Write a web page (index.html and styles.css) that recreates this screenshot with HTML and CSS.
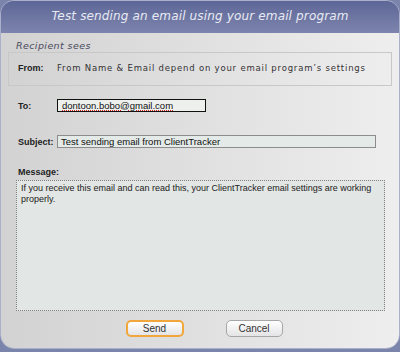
FILE: index.html
```html
<!DOCTYPE html>
<html lang="en">

<head>
    <meta charset="UTF-8">
    <meta name="viewport" content="width=device-width, initial-scale=1.0">
    <title>Test email</title>
    <link rel="stylesheet" href="styles.css">
</head>

<body>
    <div class="dialog">
        <div class="title-bar">Test sending an email using your email program</div>

        <div class="dialog-body">
            <div class="legend">Recipient sees</div>
            <div class="recipient-box">
                <span class="label">From:</span>
                <span class="from-text">From Name &amp; Email depend on your email program’s settings</span>
            </div>

            <div class="row to-row">
                <span class="label">To:</span>
                <div class="field to-field"><span class="misspelled">dontoon.bobo@gmail.com</span></div>
            </div>

            <div class="row subject-row">
                <span class="label">Subject:</span>
                <div class="field subject-field">Test sending email from ClientTracker</div>
            </div>

            <div class="message-label label">Message:</div>
            <div class="message-box">If you receive this email and can read this, your ClientTracker email settings are working properly.</div>

            <div class="buttons">
                <button class="btn btn-default">Send</button>
                <button class="btn">Cancel</button>
            </div>
        </div>
    </div>
</body>

</html>
```

FILE: styles.css
```css
body {
    margin: 0;
    padding: 0;
    background-color: #7b84ab;
    font-family: "Liberation Sans", Arial, sans-serif;
}

.dialog {
    width: 400px;
    height: 349px;
    box-sizing: border-box;
    border: 1px solid #aab0cc;
    border-radius: 14px;
    overflow: hidden;
    display: flex;
    flex-direction: column;
}

.title-bar {
    height: 32px;
    flex-shrink: 0;
    background: linear-gradient(#5d6797, #7d84ad);
    color: #e8eaf3;
    font-family: "DejaVu Sans", Verdana, sans-serif;
    font-style: italic;
    font-size: 12px;
    letter-spacing: 0.15px;
    text-align: center;
    line-height: 31px;
}

.dialog-body {
    flex: 1;
    background: linear-gradient(to right, #d2d2d3, #efeeef);
    padding: 0 7px;
}

.legend {
    margin: 7px 0 0 8px;
    height: 12px;
    line-height: 12px;
    font-family: "DejaVu Sans", Verdana, sans-serif;
    font-style: italic;
    font-size: 9.5px;
    letter-spacing: 0.4px;
    color: #4a4a5c;
}

.recipient-box {
    height: 34px;
    box-sizing: border-box;
    border: 1px solid #c9c8c9;
    display: flex;
    align-items: center;
    padding-left: 9px;
    padding-bottom: 2px;
}

.label {
    font-weight: bold;
    font-size: 9px;
    color: #222;
    width: 39px;
    flex-shrink: 0;
}

.from-text {
    font-family: "DejaVu Sans", Verdana, sans-serif;
    font-size: 8.5px;
    letter-spacing: 0.8px;
    color: #333;
}

.row {
    display: flex;
    align-items: center;
    padding-left: 10px;
}

.to-row {
    margin-top: 13px;
}

.subject-row {
    margin-top: 23px;
}

.field {
    height: 13px;
    box-sizing: border-box;
    font-size: 9.5px;
    line-height: 11px;
    padding-left: 3px;
    color: #111;
}

.to-field {
    width: 149px;
    border: 1px solid #111;
    background-color: #eef0ee;
    padding-left: 4px;
}

.misspelled {
    text-decoration: underline dotted #d02020;
    text-decoration-thickness: 1px;
    text-underline-offset: 1px;
}

.subject-field {
    width: 319px;
    border: 1px solid #8c8c8c;
    background-color: #e4eae7;
}

.message-label {
    margin: 18px 0 0 10px;
    height: 12px;
    line-height: 12px;
}

.message-box {
    margin: 2px 7px 0 8px;
    height: 131px;
    box-sizing: border-box;
    border: 1px dotted #7f7f7f;
    background-color: #e2e6e4;
    font-size: 9px;
    line-height: 11px;
    color: #222;
    padding: 2px 1px 2px 4px;
}

.buttons {
    display: flex;
    justify-content: center;
    gap: 42px;
    margin-top: 9px;
    padding-left: 8px;
}

.btn {
    height: 17px;
    width: 57px;
    padding: 0;
    border: 1px solid #a6a6a6;
    border-radius: 5px;
    background: linear-gradient(#ffffff, #e4e4e6);
    font-family: "Liberation Sans", Arial, sans-serif;
    font-size: 10px;
    color: #333;
}

.btn-default {
    border: 2px solid #f2a73c;
    width: 58px;
}
```
